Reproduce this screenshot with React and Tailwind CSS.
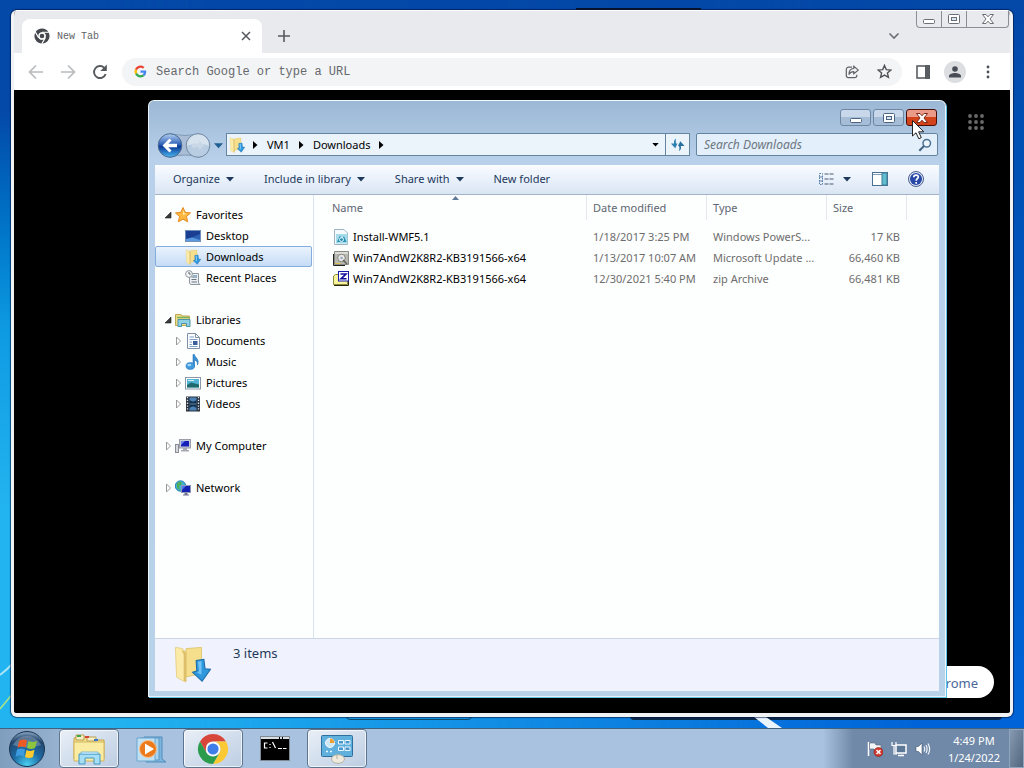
import React from "react";

const ui = "font-['Noto_Sans','Open_Sans',sans-serif]";

function Svg({ size = 16, box = "0 0 16 16", className = "", children }) {
  return (
    <svg width={size} height={size} viewBox={box} className={"shrink-0 " + className} fill="none" aria-hidden="true">
      {children}
    </svg>
  );
}

/* ---------- Shared drawings ---------- */

function DownloadsIcon({ size = 16 }) {
  return (
    <Svg size={size} box="0 0 32 32">
      <path d="M11 3 L24 2 V24 L11 27Z" fill="#f5de8c" stroke="#dcbd5c" strokeWidth="0.6" />
      <path d="M2 2 L8 3 L11 6 V31 L8 30 L3 27Z" fill="#fbeaa8" stroke="#e0c874" strokeWidth="0.6" />
      <path d="M7 4 L11 6 V31 L9 30 V8Z" fill="#dfc06a" />
      <path d="M19.500 13 L26 12 L27 20 L31.500 20.500 L24.500 30.500 L16.500 23 L20 22Z" fill="#2f97dc" stroke="#1b6dab" strokeWidth="0.9" />
      <path d="M21 14 L24 13.500 V25 L20 23 L22 22Z" fill="#72c4f4" />
    </Svg>
  );
}

function ChromeLogo({ size = 30, mono = false }) {
  const c = mono ? ["#45494d", "#45494d", "#45494d", "#45494d"] : ["#d8453a", "#fbc934", "#2a9c4c", "#3f7de8"];
  return (
    <Svg size={size} box="0 0 32 32">
      <path d="M16 1 A15 15 0 0 1 29 8.500 H16 A7.500 7.500 0 0 0 9.500 12.250 L9.500 19.750 L3 8.500 A15 15 0 0 1 16 1Z" fill={c[0]} />
      <path d="M29 8.500 A15 15 0 0 1 16 31 L22.500 19.750 A7.500 7.500 0 0 0 16 8.500Z" fill={c[1]} />
      <path d="M16 31 A15 15 0 0 1 3 8.500 L9.500 19.750 A7.500 7.500 0 0 0 22.500 19.750Z" fill={c[2]} />
      <circle cx="16" cy="16" r="7.200" fill="#fff" />
      <circle cx="16" cy="16" r={mono ? 4.6 : 5.6} fill={c[3]} />
      {mono && <path d="M16 8.500H29.500M9.500 19.700L2.800 8.200M22.500 19.700L15.500 31.500" stroke="#fff" strokeWidth="2.200" />}
    </Svg>
  );
}

function Caret({ className = "text-[#1e395b]", w = 8, h = 5 }) {
  return (
    <svg width={w} height={h} viewBox="0 0 8 5" className={"shrink-0 " + className} aria-hidden="true">
      <path d="M0 0H8L4 4.500Z" fill="currentColor" />
    </svg>
  );
}

function CrumbArrow() {
  return (
    <svg width="5" height="8" viewBox="0 0 5 8" className="shrink-0" aria-hidden="true">
      <path d="M0 0V8L4.500 4Z" fill="#000" />
    </svg>
  );
}

function MinGlyph({ stroke }) {
  return (
    <svg width="14" height="14" viewBox="0 0 14 14" aria-hidden="true">
      <rect x="1.500" y="7.500" width="11" height="4" rx="1" fill="#fff" stroke={stroke} />
    </svg>
  );
}

function MaxGlyph({ stroke }) {
  return (
    <svg width="14" height="14" viewBox="0 0 14 14" aria-hidden="true">
      <rect x="1.500" y="2.500" width="11" height="9" rx="1" fill="#fff" stroke={stroke} />
      <rect x="4.500" y="5.500" width="5" height="3" fill="#dbe6f2" stroke={stroke} />
    </svg>
  );
}

function CloseGlyph({ stroke }) {
  return (
    <svg width="14" height="14" viewBox="0 0 14 14" aria-hidden="true">
      <path d="M1.500 2.500H5L7 4.800L9 2.500H12.500L9 7L12.500 11.500H9L7 9.200L5 11.500H1.500L5 7Z" fill="#fff" stroke={stroke} />
    </svg>
  );
}

/* ---------- Browser window ---------- */

function Browser() {
  return (
    <section aria-label="Browser" className="absolute top-[10px] right-[11px] bottom-[11px] left-[11px] flex flex-col overflow-hidden rounded-md border-x-3 border-b-4 border-[#f1f2f4] bg-black font-['Liberation_Mono',monospace] shadow-[0_0_1px_1px_rgba(0,20,60,0.6)]">
      <div className="flex h-[43px] shrink-0 items-start justify-between border-t border-white bg-[#e8eaed]">
        <div className="flex h-full items-end pl-2">
          <div className="flex h-[34px] w-[240px] items-center rounded-t-lg bg-white pr-2 pl-3">
            <ChromeLogo size={16} mono />
            <span className="ml-[7px] grow text-[10px] text-[#5f6368]">New Tab</span>
            <button aria-label="Close tab" className="grid size-4 place-items-center">
              <Svg size={10} box="0 0 10 10"><path d="M1 1L9 9M9 1L1 9" stroke="#55595e" strokeWidth="1.500" /></Svg>
            </button>
          </div>
          <button aria-label="New tab" className="ml-3 grid h-[34px] w-5 place-items-center">
            <Svg size={12} box="0 0 12 12"><path d="M6 0V12M0 6H12" stroke="#55595e" strokeWidth="1.600" /></Svg>
          </button>
        </div>
        <div className="flex">
          <button aria-label="Search tabs" className="mt-[19px] mr-4 grid size-3 place-items-center">
            <Svg size={12} box="0 0 12 12"><path d="M1.500 3.500L6 8L10.500 3.500" stroke="#6a6d72" strokeWidth="1.600" /></Svg>
          </button>
          <div className="mr-px flex h-[17px] overflow-hidden rounded-b border border-t-0 border-[#8b8e94]">
            <button aria-label="Minimize" className="grid w-[25px] place-items-center border-r border-[#8b8e94]"><MinGlyph stroke="#6b6e74" /></button>
            <button aria-label="Maximize" className="grid w-[25px] place-items-center border-r border-[#8b8e94]"><MaxGlyph stroke="#6b6e74" /></button>
            <button aria-label="Close" className="grid w-[41px] place-items-center"><CloseGlyph stroke="#6b6e74" /></button>
          </div>
        </div>
      </div>

      <div className="flex h-[37px] shrink-0 items-center bg-white pr-[14px] pl-[14px]">
        <button aria-label="Back" className="flex">
          <Svg><path d="M15 8H2M8 1.500L1.500 8L8 14.500" stroke="#b9bbbe" strokeWidth="1.700" /></Svg>
        </button>
        <button aria-label="Forward" className="ml-4 flex">
          <Svg><path d="M1 8H14M8 1.500L14.500 8L8 14.500" stroke="#b9bbbe" strokeWidth="1.700" /></Svg>
        </button>
        <button aria-label="Reload" className="ml-4 flex">
          <Svg><path d="M13.700 10A6 6 0 1 1 12.300 3.800" stroke="#55595e" strokeWidth="1.900" /><path d="M14.800 0.500V7H8.300Z" fill="#55595e" /></Svg>
        </button>
        <div className="ml-[14px] flex h-7 grow items-center rounded-full bg-[#f3f4f5] pr-[10px] pl-3">
          <Svg size={13} box="0 0 48 48">
            <path fill="#4285f4" d="M45 24.500c0-1.600-.1-2.800-.4-4H24v8h12c-.3 2-1.600 5-4.500 7l7 5.500C42.500 37 45 31.500 45 24.500z" />
            <path fill="#34a853" d="M24 46c6 0 11-2 14.600-5.300l-7-5.400C29.800 36.600 27.300 37.500 24 37.500c-5.800 0-10.700-3.800-12.500-9.100l-7.200 5.600C8 41 15.400 46 24 46z" />
            <path fill="#fbbc05" d="M11.500 28.400A13.500 13.500 0 0 1 11.500 19.600L4.300 14a22 22 0 0 0 0 20z" />
            <path fill="#ea4335" d="M24 10.500c4.100 0 6.900 1.800 8.500 3.300l6.200-6C34.900 4.200 30 2 24 2 15.400 2 8 7 4.300 14l7.200 5.600C13.300 14.300 18.200 10.500 24 10.500z" />
          </Svg>
          <input aria-label="Address" placeholder="Search Google or type a URL" className="ml-[9px] min-w-0 grow bg-transparent text-[12px] outline-none placeholder:text-[#65696e]" />
          <button aria-label="Share this page">
            <Svg size={14}><path d="M8 2.500H4A2.500 2.500 0 0 0 1.500 5V12A2.500 2.500 0 0 0 4 14.500H11A2.500 2.500 0 0 0 13.500 12V11" stroke="#5f6368" strokeWidth="1.400" /><path d="M10 1.500L15.200 5.800L10 10V7.500C7.500 7.500 5.700 8.500 4.500 11C4.500 7 6.500 4.200 10 4Z" stroke="#5f6368" strokeWidth="1.300" /></Svg>
          </button>
          <button aria-label="Bookmark" className="ml-[18px]">
            <Svg size={15}><path d="M8 1.500L9.900 6L14.800 6.400L11.100 9.600L12.200 14.300L8 11.800L3.800 14.300L4.900 9.600L1.200 6.400L6.100 6Z" stroke="#50545a" strokeWidth="1.500" /></Svg>
          </button>
        </div>
        <button aria-label="Side panel" className="ml-[14px]">
          <Svg size={14} box="0 0 14 14"><rect x="1" y="1" width="12" height="12" stroke="#5a5e63" strokeWidth="1.600" /><path d="M9 0H14V14H9Z" fill="#5a5e63" /></Svg>
        </button>
        <button aria-label="Profile" className="ml-[14px] grid size-[22px] place-items-center rounded-full bg-[#dcdee2]">
          <Svg size={14} box="0 0 14 14"><circle cx="7" cy="4" r="2.800" fill="#484d55" /><path d="M1 12.500V11C1 9 4.500 8 7 8S13 9 13 11V12.500Z" fill="#484d55" /></Svg>
        </button>
        <button aria-label="Browser menu" className="ml-[14px] grid w-4 place-items-center">
          <Svg size={14} box="0 0 14 14"><circle cx="7" cy="2" r="1.400" fill="#4c5055" /><circle cx="7" cy="7" r="1.400" fill="#4c5055" /><circle cx="7" cy="12" r="1.400" fill="#4c5055" /></Svg>
        </button>
      </div>

      <div className="flex grow flex-col items-end justify-between px-4 pt-6 pb-[15px]">
        <button aria-label="Apps" className="mr-[10px]">
          <Svg size={16}>
            {[2, 8, 14].map((y) => [2, 8, 14].map((x) => <circle key={x + "-" + y} cx={x} cy={y} r="1.900" fill="#6a6a6a" />))}
          </Svg>
        </button>
        <button className={"flex h-8 w-[190px] items-center justify-end rounded-full bg-white pt-1 pr-4 text-[13px] text-[#4a679c] " + ui}>Customize Chrome</button>
      </div>
    </section>
  );
}

/* ---------- Explorer icons ---------- */

const icons = {
  star: <Svg><path d="M8 0.500L10.200 5.300L15.500 5.900L11.500 9.500L12.600 14.800L8 12.200L3.400 14.800L4.500 9.500L0.500 5.900L5.800 5.300Z" fill="#fbb740" stroke="#e58a1f" /><path d="M8 3L9.300 6.300L12 6.800L8 8Z" fill="#ffe9a8" /></Svg>,
  desktop: <Svg><rect x="0.500" y="2.500" width="15" height="11" fill="#2d62b5" stroke="#6f8fb8" /><path d="M1 3H15V6L1 12Z" fill="#1a3f92" /><path d="M1 11L7 9.500L15 12V13H1Z" fill="#5b9adf" /></Svg>,
  downloads: <DownloadsIcon />,
  recent: <Svg><path d="M4.500 3.500H13.500V13L15 14.500H5.500L4.500 13Z" fill="#eceff3" stroke="#8f979f" /><path d="M6.500 7H11.500M6.500 9.500H11.500M6.500 12H12" stroke="#6f7880" /><rect x="8" y="5" width="4" height="3" fill="#9ab0c6" /><circle cx="4" cy="4" r="3.400" fill="#f4f6f8" stroke="#8f979f" /><path d="M4 2V4H5.700" stroke="#586068" /></Svg>,
  libraries: <Svg><path d="M0.500 2.500H6L7 4H14.500V13.500H0.500Z" fill="#f0dc85" stroke="#bda654" /><path d="M2 5.500H14" stroke="#76b35d" strokeWidth="1.500" /><path d="M3 7.500H15V14.500H11.500V11.500H6.500V14.500H3Z" fill="#8fd0e5" stroke="#4a93ad" /></Svg>,
  documents: <Svg><path d="M2.500 0.500H10.500L14.500 4.500V15.500H2.500Z" fill="#fbfdff" stroke="#7e91a8" /><path d="M10.500 0.500V4.500H14.500" stroke="#7e91a8" /><path d="M4.500 4H9M4.500 6.500H12.500M4.500 9H7M4.500 11.500H7M4.500 13.500H12.500" stroke="#7fa0c8" /><rect x="8" y="8" width="4.500" height="4" fill="#3b5f9b" /></Svg>,
  music: <Svg><path d="M8 0.500H9.500C10 4 15 5 12.500 11C12.800 7.500 11 6.500 9.500 6.200V12.500H8Z" fill="#3b8fd0" stroke="#2577bd" strokeWidth="0.600" /><ellipse cx="5.300" cy="12" rx="4.300" ry="3.400" fill="#3f9ade" stroke="#2577bd" strokeWidth="0.600" /><ellipse cx="4.300" cy="11" rx="2" ry="1.200" fill="#9fd4f6" /></Svg>,
  pictures: <Svg><rect x="0.500" y="2.500" width="15" height="11.500" fill="#fff" stroke="#8b98a8" /><rect x="2" y="4" width="12" height="8.500" fill="#52b3d6" /><path d="M2 10L6 7.500L14 9.500V12.500H2Z" fill="#1f6a6f" /><path d="M3 5.500H9" stroke="#d3f0f8" /></Svg>,
  videos: <Svg><rect x="1" y="0.500" width="14" height="15" fill="#29323f" /><path d="M2.500 1V15M13.500 1V15" stroke="#dfe6ee" strokeWidth="1.300" strokeDasharray="1.300 1.500" /><rect x="4.500" y="1.500" width="7" height="6" fill="#4b83b9" /><rect x="4.500" y="8.500" width="7" height="6" fill="#4b83b9" /><path d="M4.500 4L7 5.500H9L11.500 4V7H4.500ZM4.500 12L7 10.500H9L11.500 12V9H4.500Z" fill="#16304a" /></Svg>,
  computer: <Svg><rect x="0.500" y="6.500" width="3" height="8" fill="#d5d8dd" stroke="#8a8f97" /><rect x="4.500" y="1.500" width="11" height="8.500" fill="#c8cbd6" stroke="#9a9daa" /><rect x="6" y="3" width="8" height="5.500" fill="#1620b8" /><path d="M6 3H10L6 7Z" fill="#6a86ee" /><path d="M8 10H12V12H14V13.500H6V12H8Z" fill="#a6a9b2" /></Svg>,
  network: <Svg><circle cx="5.500" cy="6" r="5.200" fill="#3fb3d1" stroke="#2a7fb2" /><path d="M2 3L6 1.500L7 4L4 6L5 10L2 8Z" fill="#4fae52" /><rect x="6.500" y="5.500" width="9" height="7" fill="#1522b4" stroke="#8f95b5" /><path d="M7 6H11L7 10Z" fill="#4f78ea" /><path d="M9.500 13H12.500V14.500H14V15.500H8V14.500H9.500Z" fill="#6d7290" /></Svg>,
  script: <Svg><path d="M1.500 0.500H11L14.500 4V15.500H1.500Z" fill="#f7fafc" stroke="#9eb3c2" /><rect x="3" y="5" width="11.500" height="9.500" fill="#a6dbea" /><path d="M4 13L7 6.500L9 10L11 7L13.500 13Z" fill="#2d93b4" /><circle cx="8.500" cy="10.500" r="2" stroke="#e6f6fb" /></Svg>,
  update: <Svg><path d="M1.500 1.500H15.500V14.500H1.500Z" fill="#b9b9b4" stroke="#8a8a82" /><path d="M0.500 4V15.500H12" stroke="#222" /><path d="M2 2H15V4H2Z" fill="#dcdcd6" /><circle cx="8.500" cy="8" r="3.800" fill="#e9e9e6" stroke="#84847e" /><path d="M10 10L14 14" stroke="#626258" strokeWidth="1.600" /><circle cx="8.500" cy="8" r="1.300" fill="#99a7c8" /><path d="M2 13.500H8" stroke="#d8c34e" /></Svg>,
  zip: <Svg><path d="M0.500 5L2.500 3.500H5.500L7 5H14.500V13.500H0.500Z" fill="#f6f39a" stroke="#8a8a3a" /><path d="M1 14.500H15.500V8" stroke="#26260c" /><rect x="5.500" y="0.500" width="10" height="9.500" fill="#fff" stroke="#1a1aa8" /><path d="M7.500 3H13L8 7.800H13.500" stroke="#10109c" strokeWidth="1.600" /></Svg>,
};

function Twisty({ open }) {
  return (
    <Svg size={10} box="0 0 10 10">
      {open ? <path d="M8 2V8H2Z" fill="#3a3a3a" stroke="#222" strokeWidth="0.600" /> : <path d="M3.500 1L7.500 5L3.500 9Z" fill="#fff" stroke="#9a9a9a" />}
    </Svg>
  );
}

const tree = [
  [{ icon: "star", label: "Favorites", open: true }, { icon: "desktop", label: "Desktop" }, { icon: "downloads", label: "Downloads", selected: true }, { icon: "recent", label: "Recent Places" }],
  [{ icon: "libraries", label: "Libraries", open: true }, { icon: "documents", label: "Documents", open: false }, { icon: "music", label: "Music", open: false }, { icon: "pictures", label: "Pictures", open: false }, { icon: "videos", label: "Videos", open: false }],
  [{ icon: "computer", label: "My Computer", open: false }],
  [{ icon: "network", label: "Network", open: false }],
];

const files = [
  ["script", "Install-WMF5.1", "1/18/2017 3:25 PM", "Windows PowerS...", "17 KB"],
  ["update", "Win7AndW2K8R2-KB3191566-x64", "1/13/2017 10:07 AM", "Microsoft Update ...", "66,460 KB"],
  ["zip", "Win7AndW2K8R2-KB3191566-x64", "12/30/2021 5:40 PM", "zip Archive", "66,481 KB"],
];

function Sidebar() {
  return (
    <nav aria-label="Folders" className="w-[159px] shrink-0 border-r border-[#d9e4f0] pt-[9px] pr-px">
      {tree.map((group) => (
        <ul key={group[0].label} className="mb-[21px]">
          {group.map((item, i) => (
            <li key={item.label}>
              <button
                className={
                  "flex h-[21px] w-full items-center rounded-xs border text-left " +
                  (i ? "pl-[17px] " : "pl-[7px] ") +
                  (item.selected ? "border-[#84acdd] bg-linear-to-b from-[#eaf3fd] to-[#c5dcf6]" : "border-transparent")
                }
              >
                <span className="mr-[2px] flex w-[10px]">{item.open !== undefined && <Twisty open={item.open} />}</span>
                {icons[item.icon]}
                <span className="ml-[5px]">{item.label}</span>
              </button>
            </li>
          ))}
        </ul>
      ))}
    </nav>
  );
}

function FileList() {
  const head = "p-0 pb-[6px] text-left font-normal text-[#5d6672]";
  const cell = "flex h-[25px] items-center border-r border-[#e3e9f1] pl-[6px]";
  return (
    <div className="relative min-w-0 grow">
      <svg width="7" height="4" viewBox="0 0 7 4" className="absolute top-px left-[138px]" aria-hidden="true"><path d="M0 4L3.500 0L7 4Z" fill="#5f7a99" /></svg>
      <table className="w-full table-fixed border-collapse">
        <thead>
          <tr>
            <th className={head + " w-[273px]"}><div className={cell + " pl-[18px]"}>Name</div></th>
            <th className={head + " w-[120px]"}><div className={cell}>Date modified</div></th>
            <th className={head + " w-[120px]"}><div className={cell}>Type</div></th>
            <th className={head + " w-[80px]"}><div className={cell}>Size</div></th>
            <td />
          </tr>
        </thead>
        <tbody>
          {files.map(([icon, name, date, type, size]) => (
            <tr key={date} className="h-[21px] whitespace-nowrap text-[#6d6d6d]">
              <td className="p-0 pl-[19px] text-black"><span className="flex items-center gap-1">{icons[icon]}{name}</span></td>
              <td className="p-0 pl-[6px]">{date}</td>
              <td className="p-0 pl-[6px]">{type}</td>
              <td className="p-0 pr-[7px] text-right">{size}</td>
              <td />
            </tr>
          ))}
        </tbody>
      </table>
    </div>
  );
}

function Cursor() {
  return (
    <svg width="13" height="20" viewBox="0 0 13 20" className="pointer-events-none absolute top-[11px] left-[6px] z-10" aria-hidden="true">
      <path d="M0.500 0.500V16L4 12.800L6.800 18.800L9.300 17.600L6.600 11.800H11.800Z" fill="#fff" stroke="#222" />
    </svg>
  );
}

function Explorer() {
  const cap = "grid h-[17px] w-[31px] place-items-center rounded-[3px] border border-[#6d87a4] bg-linear-to-b from-[#c8d8ea] from-50% to-[#a5bdd6] to-50%";
  const tool = "flex items-center gap-[6px]";
  return (
    <section aria-label="Downloads" className={"absolute top-[100px] right-[78px] bottom-[31px] left-[148px] flex flex-col rounded-t-md border border-white/80 bg-linear-to-b from-[#9bb8d5] via-[#b9d0ea] via-10% to-[#b7d2e9] px-[6px] pb-[5px] text-[11px] leading-4 text-black shadow-[1px_1px_0_#5cc4e6] " + ui}>
      <header className="flex h-[31px] shrink-0 items-start justify-end gap-[2px] pt-2 pr-[2px]">
        <button aria-label="Minimize window" className={cap}><MinGlyph stroke="#4d6480" /></button>
        <button aria-label="Maximize window" className={cap}><MaxGlyph stroke="#4d6480" /></button>
        <div className="relative">
          <button aria-label="Close window" className="grid h-[17px] w-[31px] place-items-center rounded-[3px] border border-[#4a1008] bg-linear-to-b from-[#ea9a86] from-45% to-[#d2431c] to-50%"><CloseGlyph stroke="#7a2a1a" /></button>
          <Cursor />
        </div>
      </header>

      <div className="flex h-[33px] shrink-0 items-start gap-1 pr-px pl-[2px]">
        <div className="flex items-center">
          <svg width="54" height="27" viewBox="0 0 54 27" aria-hidden="true">
            <defs>
              <linearGradient id="nav" x1="0" y1="0" x2="0" y2="1"><stop offset="0" stopColor="#b4d0f0" /><stop offset="0.45" stopColor="#2f62b8" /><stop offset="0.55" stopColor="#0b3a96" /><stop offset="1" stopColor="#49b8f0" /></linearGradient>
            </defs>
            <path d="M13 2Q28 5 43 2V25Q28 21 13 25Z" fill="#a9bed6" stroke="#8099b5" />
            <circle cx="13" cy="13.500" r="11.800" fill="url(#nav)" stroke="#4a6790" />
            <path d="M12.500 6.500L5.500 13.500L12.500 20.500L14.500 18.500L11.300 15.200H20V11.800H11.300L14.500 8.500Z" fill="#fff" />
            <circle cx="41" cy="13.500" r="11.800" fill="#b9cde2" stroke="#71879f" />
            <path d="M30 13.500A11 11 0 0 1 52 13.500Q41 10 30 13.500Z" fill="#d6e2ee" />
            <path d="M42 8.500L47 13.500L42 18.500V15.500H35V11.500H42Z" fill="#c9d7e6" />
          </svg>
          <button aria-label="Recent pages" className="ml-[3px] grid h-5 w-2 place-items-center"><Caret className="text-[#1d5f91]" w={9} h={6} /></button>
        </div>
        <div className="mt-px flex h-[23px] grow items-center border border-[#64849f] bg-[#ebf3fb]">
          <span className="mr-2 ml-[2px] flex"><DownloadsIcon /></span>
          <CrumbArrow />
          <button className="mx-[9px]">VM1</button>
          <CrumbArrow />
          <button className="mx-[9px]">Downloads</button>
          <CrumbArrow />
          <span className="grow" />
          <button aria-label="Address history" className="mr-[6px]"><Caret className="text-black" w={7} h={4} /></button>
          <button aria-label="Refresh" className="grid h-full w-6 place-items-center border-l border-[#64849f]">
            <Svg size={15}><path d="M6.500 1.500C4 3 4 5 4.500 7H1L5.500 12L8 7H6.500C6 5 6 3.500 6.500 1.500Z" fill="#2d7fb0" /><path d="M9.500 15C12 13.500 12 11.500 11.500 9.500H15.500L11 4.500L8.500 9.500H9.500C10.500 11.500 10 13 9.500 15Z" fill="#286f9f" /></Svg>
          </button>
        </div>
        <label className="mt-px ml-[2px] flex h-[23px] w-[242px] items-center rounded-xs border border-[#64849f] bg-[#e3effa] pr-[5px] pl-[7px] text-[12px]">
          <input aria-label="Search Downloads" placeholder="Search Downloads" className="min-w-0 grow bg-transparent italic outline-none placeholder:text-[#6c7681]" />
          <Svg size={14}><circle cx="10" cy="6" r="4.300" stroke="#4d7294" strokeWidth="1.700" fill="#eef6fc" /><path d="M7 9L1.500 14.500" stroke="#40627f" strokeWidth="2.400" /></Svg>
        </label>
      </div>

      <div className="flex h-[30px] shrink-0 items-center border-b border-[#a3b4c8] bg-linear-to-b from-[#fafcff] via-[#e9f1fb] to-[#dae5f3] pr-[15px] pb-px pl-[18px] text-[#1e395b]">
        <button className={tool}>Organize <Caret /></button>
        <button className={tool + " ml-[30px]"}>Include in library <Caret /></button>
        <button className={tool + " ml-[30px]"}>Share with <Caret /></button>
        <button className="ml-[30px]">New folder</button>
        <span className="grow" />
        <button aria-label="Change view" className="flex items-center gap-[9px]">
          <Svg><path d="M1.500 2.500H4.500V13.500H1.500Z" stroke="#5c7fa6" strokeDasharray="1.500 1" /><path d="M1 6H5M1 10H5" stroke="#5c7fa6" /><path d="M6.500 3H15.500M6.500 8H15.500M6.500 13H15.500" stroke="#4b5b70" strokeDasharray="4 1" /></Svg>
          <Caret />
        </button>
        <button aria-label="Preview pane" className="ml-[21px]">
          <Svg><rect x="0.500" y="1.500" width="15" height="13" fill="#fff" stroke="#4c7190" /><path d="M1 3.500H10" stroke="#7f9db6" /><rect x="10" y="2" width="5" height="12" fill="#61bcd0" stroke="#3c7f99" /></Svg>
        </button>
        <button aria-label="Help" className="ml-5">
          <svg width="16" height="16" viewBox="0 0 16 16" aria-hidden="true">
            <circle cx="8" cy="8" r="7.500" fill="#dfe6f2" stroke="#4a5f90" />
            <circle cx="8" cy="8" r="6" fill="#2748a8" />
            <path d="M5.800 6.200C5.800 3.300 10.300 3.400 10.300 6C10.300 7.700 8.200 7.700 8.200 9.700M8.200 11V12.700" fill="none" stroke="#fff" strokeWidth="1.700" />
          </svg>
        </button>
      </div>

      <div className="flex min-h-0 grow overflow-hidden bg-[#fdfefe]">
        <Sidebar />
        <FileList />
      </div>

      <footer className="flex h-[53px] shrink-0 items-start border-t border-[#ccd6e4] bg-[#f0f3fd] pl-[18px] text-[#1e395b]">
        <span className="mt-[6px] flex">
          <DownloadsIcon size={38} />
        </span>
        <span className="mt-[6px] ml-[22px] text-[13px] leading-4">3 items</span>
      </footer>
    </section>
  );
}

/* ---------- Taskbar ---------- */

function TaskButton({ label, active, children }) {
  return (
    <button
      aria-label={label}
      className={
        "grid h-full w-[60px] place-items-center " +
        (active ? "rounded-sm border border-[#5e7590] bg-linear-to-br from-[#e9eff7] to-[#bccde2] shadow-[inset_0_0_0_1px_rgba(255,255,255,0.7)]" : "")
      }
    >
      {children}
    </button>
  );
}

function Taskbar() {
  return (
    <footer className={"flex h-10 shrink-0 border-t border-[#40617f] bg-linear-to-r from-[#7f9dbd] via-[#a8c2df] via-10% to-[#a8c2df] text-[12px] " + ui}>
      <button aria-label="Start" className="grid w-[54px] place-items-center">
        <svg width="38" height="38" viewBox="0 0 38 38" aria-hidden="true">
          <defs>
            <radialGradient id="orb" cx="0.5" cy="0.95" r="0.9"><stop offset="0" stopColor="#49d0f0" /><stop offset="0.45" stopColor="#1c6ba6" /><stop offset="0.85" stopColor="#23476e" /><stop offset="1" stopColor="#7694b2" /></radialGradient>
          </defs>
          <circle cx="19" cy="19" r="17.500" fill="url(#orb)" stroke="#1c3450" />
          <path d="M5 15A15 14 0 0 1 33 15Q19 20 5 15Z" fill="#fff" opacity="0.25" />
          <path d="M11 11Q15 8.500 19 10.500L17.500 17.500Q13.500 15.500 9.500 18Z" fill="#ee5a24" />
          <path d="M20.500 11Q24.500 13 29 11L27 18Q23 20 19 18Z" fill="#8cc63f" />
          <path d="M9 19.500Q13 17.500 17 19.500L15.500 26.500Q11.500 24.500 7.500 27Z" fill="#3d9be0" />
          <path d="M18.500 20Q22.500 22 26.500 19.800L25 27Q21 29 17 27Z" fill="#fcc92e" />
        </svg>
      </button>
      <div className="ml-[5px] flex gap-[2px]">
        <TaskButton label="Windows Explorer" active>
          <svg width="34" height="32" viewBox="0 0 34 32" aria-hidden="true">
            <path d="M2 5V26H32V7H20L18 4H5Z" fill="#f3df8d" stroke="#c4a549" />
            <path d="M4 2H12V7H4ZM15 4H24V8H15Z" fill="#f8efc6" stroke="#b99f50" />
            <path d="M5 2H9V4H5Z" fill="#3fa34a" /><path d="M13 3H17V5H13Z" fill="#d2473a" /><path d="M22 6H26V8H22Z" fill="#3d76c4" />
            <path d="M2 9H32V28H2Z" fill="#fbeca4" stroke="#d2b65c" />
            <path d="M7 31V21H28V31H22V25H13V31Z" fill="#a6dff5" stroke="#4297c2" />
            <path d="M9 19H26V21H9Z" fill="#d9f3fc" stroke="#57a8ce" strokeWidth="0.700" />
          </svg>
        </TaskButton>
        <TaskButton label="Media Player">
          <svg width="30" height="28" viewBox="0 0 30 28" aria-hidden="true">
            <path d="M8 2H26V24L30 27H10Z" fill="#7fb4dc" stroke="#4f8dbd" />
            <path d="M4 3H23V25H4Z" fill="#a8d3ee" stroke="#5c9ac4" /><path d="M1 3H19V26H1Z" fill="#c0e0f4" stroke="#6ba6cd" />
            <circle cx="12" cy="14" r="8.500" fill="#ec7a1c" stroke="#f7c089" /><path d="M9 8.500V19.500L18 14Z" fill="#fff" />
          </svg>
        </TaskButton>
        <TaskButton label="Chrome" active><ChromeLogo size={32} /></TaskButton>
        <TaskButton label="Command Prompt">
          <svg width="30" height="25" viewBox="0 0 30 25" aria-hidden="true">
            <rect x="0.500" y="0.500" width="29" height="24" fill="#000" stroke="#7e8a96" /><path d="M1 2H29" stroke="#d9dee3" strokeWidth="2" strokeDasharray="18 1 2 1" />
            <path d="M7.500 7H4.500V12H7.500M10 8V9M10 11V12M12.500 6L15.500 12M18 12.500H22M23 12.500H26.500" stroke="#fff" strokeWidth="1.200" fill="none" />
          </svg>
        </TaskButton>
        <TaskButton label="Control Panel" active>
          <svg width="34" height="30" viewBox="0 0 34 30" aria-hidden="true">
            <rect x="1.500" y="1.500" width="31" height="21" rx="1" fill="#5fb0dd" stroke="#2e6f9d" />
            <circle cx="10" cy="9" r="4.500" fill="#cfe8f5" stroke="#f4f9fc" /><path d="M10 9V4.500A4.500 4.500 0 0 1 14.500 9Z" fill="#f0a030" />
            <path d="M18.500 6.500H23.500V10H18.500ZM25 6.500H30V10H25ZM18.500 13H23.500V16.500H18.500ZM25 13H30V16.500H25Z" fill="#4a97cc" stroke="#e8f6fd" />
            <path d="M6 17.500H8M10 17.500H12" stroke="#eaf7fd" strokeWidth="1.500" />
            <ellipse cx="18" cy="25" rx="6.500" ry="4.300" fill="#eeeade" stroke="#b5b0a0" /><path d="M17 21V25" stroke="#b5b0a0" />
          </svg>
        </TaskButton>
      </div>
      <div className="ml-auto flex items-center bg-linear-to-r from-transparent to-[#7089a8] to-15% pl-11 text-white">
        <div className="flex items-center gap-2">
          <button aria-label="Action Center"><Svg><path d="M1.500 1V15" stroke="#fff" strokeWidth="1.500" /><path d="M2.500 2H8L9 4H14V9H8L7 8H2.500Z" fill="#f4f6f8" stroke="#53647a" strokeWidth="0.600" /><circle cx="11.500" cy="11" r="4.500" fill="#d23a30" stroke="#8c1f1a" strokeWidth="0.600" /><path d="M9.500 9L13.500 13M13.500 9L9.500 13" stroke="#fff" strokeWidth="1.500" /></Svg></button>
          <button aria-label="Network status"><Svg><rect x="5" y="4" width="10" height="8" fill="#5d7796" stroke="#fff" strokeWidth="1.500" /><path d="M7 14.500H13" stroke="#fff" strokeWidth="1.500" /><path d="M1 1V4.500H5V1M3 4.500V13H6" stroke="#fff" strokeWidth="1.200" /></Svg></button>
          <button aria-label="Volume"><Svg><path d="M1 5.500H3.500L7 2V14L3.500 10.500H1Z" fill="#fff" stroke="#41566f" strokeWidth="0.600" /><path d="M9 5.500Q10.500 8 9 10.500M11 4Q13.200 8 11 12M13 2.500Q16.300 8 13 13.500" stroke="#eef3f8" strokeWidth="1.200" /></Svg></button>
        </div>
        <time className="ml-4 flex w-[54px] flex-col items-center text-center text-[11px] leading-[17px]">
          <span>4:49 PM</span>
          <span>1/24/2022</span>
        </time>
        <button aria-label="Show desktop" className="ml-[8px] h-full w-[15px] border border-[#8fa5bd] bg-linear-to-br from-[#8599b1] to-[#53687f]" />
      </div>
    </footer>
  );
}

/* ---------- Desktop ---------- */

function Wallpaper() {
  return (
    <div className="absolute inset-0">
      <div className="absolute inset-0 bg-linear-to-b from-[#0448a8] via-[#0050b4] via-20% to-[#0064d8]" />
      <div className="absolute inset-y-0 left-0 w-full bg-linear-to-b from-[#0448a8] from-15% via-[#0e9ae2] via-45% to-[#22b4f0] to-70% mask-r-from-10% mask-r-to-90%" />
      <svg width="14" height="80" viewBox="0 0 14 80" className="absolute bottom-2 left-0" aria-hidden="true">
        <path d="M0 35Q7 30 14 22" stroke="#a8e4f8" strokeWidth="2" fill="none" />
        <path d="M0 69L14 52" stroke="#a6e48c" strokeWidth="1.500" fill="none" />
      </svg>
      <div className="absolute top-2 left-[576px] h-2 w-[125px] bg-[#0a1428]" />
      <div className="absolute bottom-2 left-[346px] h-4 w-[126px] rounded-b border border-[#0d4a6c]" />
      <div className="absolute right-[22px] bottom-2 h-4 w-[372px] rounded-b bg-[#0a2648]" />
      <svg width="34" height="12" viewBox="0 0 34 12" className="absolute bottom-0 left-[752px]" aria-hidden="true">
        <path d="M2 1H14L30 12H16Z" fill="#eaf4fc" />
      </svg>
    </div>
  );
}

export default function App() {
  return (
    <div className="flex h-screen flex-col overflow-hidden">
      <main className="relative grow overflow-hidden">
        <Wallpaper />
        <Browser />
        <Explorer />
      </main>
      <Taskbar />
    </div>
  );
}
